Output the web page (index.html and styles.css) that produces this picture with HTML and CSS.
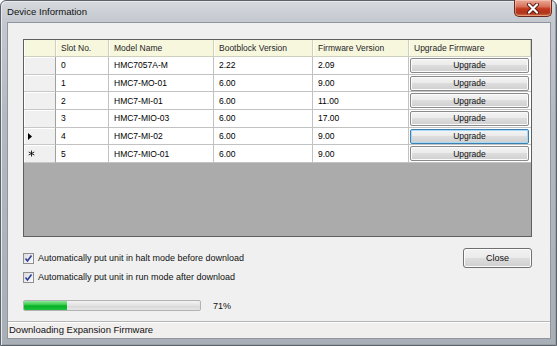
FILE: index.html
```html
<!DOCTYPE html>
<html>
<head>
<meta charset="utf-8">
<link rel="stylesheet" href="styles.css">
</head>
<body>
<div class="window">
  <div class="titlebar">
    <span class="title">Device Information</span>
    <div class="close-x">
      <svg width="14" height="11" viewBox="0 0 14 11"><path d="M3 1.5 L11 9.5 M11 1.5 L3 9.5" stroke="#5a1a10" stroke-width="4" stroke-linecap="round"/><path d="M3 1.5 L11 9.5 M11 1.5 L3 9.5" stroke="#fff" stroke-width="2.2" stroke-linecap="round"/></svg>
    </div>
  </div>
  <div class="client">
    <div class="content">
      <div class="grid">
        <div class="row head">
          <div class="c rh"></div>
          <div class="c slot">Slot No.</div>
          <div class="c model">Model Name</div>
          <div class="c boot">Bootblock Version</div>
          <div class="c fw">Firmware Version</div>
          <div class="c up">Upgrade Firmware</div>
        </div>
        <div class="row">
          <div class="c rh"></div>
          <div class="c slot">0</div>
          <div class="c model">HMC7057A-M</div>
          <div class="c boot">2.22</div>
          <div class="c fw">2.09</div>
          <div class="c up"><span class="btn">Upgrade</span></div>
        </div>
        <div class="row">
          <div class="c rh"></div>
          <div class="c slot">1</div>
          <div class="c model">HMC7-MO-01</div>
          <div class="c boot">6.00</div>
          <div class="c fw">9.00</div>
          <div class="c up"><span class="btn">Upgrade</span></div>
        </div>
        <div class="row">
          <div class="c rh"></div>
          <div class="c slot">2</div>
          <div class="c model">HMC7-MI-01</div>
          <div class="c boot">6.00</div>
          <div class="c fw">11.00</div>
          <div class="c up"><span class="btn">Upgrade</span></div>
        </div>
        <div class="row">
          <div class="c rh"></div>
          <div class="c slot">3</div>
          <div class="c model">HMC7-MIO-03</div>
          <div class="c boot">6.00</div>
          <div class="c fw">17.00</div>
          <div class="c up"><span class="btn">Upgrade</span></div>
        </div>
        <div class="row">
          <div class="c rh"><svg width="5" height="7" viewBox="0 0 5 7"><path d="M0 0 L4 3.5 L0 7 Z" fill="#000"/></svg></div>
          <div class="c slot">4</div>
          <div class="c model">HMC7-MI-02</div>
          <div class="c boot">6.00</div>
          <div class="c fw">9.00</div>
          <div class="c up"><span class="btn focus">Upgrade</span></div>
        </div>
        <div class="row">
          <div class="c rh"><svg width="7" height="7" viewBox="0 0 7 7"><path d="M3.5 0.5 V6.5 M0.7 2 L6.3 5 M6.3 2 L0.7 5" stroke="#111" stroke-width="0.9"/></svg></div>
          <div class="c slot">5</div>
          <div class="c model">HMC7-MIO-01</div>
          <div class="c boot">6.00</div>
          <div class="c fw">9.00</div>
          <div class="c up"><span class="btn">Upgrade</span></div>
        </div>
      </div>
      <div class="bottom">
        <div class="options">
          <label class="check-row"><span class="box"><svg width="9" height="9" viewBox="0 0 9 9"><path d="M1.5 4.5 L3.5 7 L7.5 1.5" stroke="#2a3f9a" stroke-width="1.6" fill="none"/></svg></span>Automatically put unit in halt mode before download</label>
          <label class="check-row second"><span class="box"><svg width="9" height="9" viewBox="0 0 9 9"><path d="M1.5 4.5 L3.5 7 L7.5 1.5" stroke="#2a3f9a" stroke-width="1.6" fill="none"/></svg></span>Automatically put unit in run mode after download</label>
          <div class="progress-row">
            <div class="progress"><div class="fill" style="width:43px"></div></div>
            <span class="pct">71%</span>
          </div>
        </div>
        <div class="close-btn">Close</div>
      </div>
    </div>
    <div class="status">Downloading Expansion Firmware</div>
  </div>
</div>
</body>
</html>
```
FILE: styles.css
```css
html, body {
  margin: 0;
  padding: 0;
}
body {
  width: 557px;
  height: 346px;
  overflow: hidden;
  background: #fff;
  font-family: "Liberation Sans", Arial, sans-serif;
  color: #000;
}
.window {
  box-sizing: border-box;
  width: 557px;
  height: 346px;
  border: 1px solid #5d636a;
  border-radius: 6px 6px 0 0;
  padding: 0 5px 6px 6px;
  display: flex;
  flex-direction: column;
  background: linear-gradient(to bottom, #d6dadf 0px, #c4c9cf 20px, #b3b9c0 120px, #a9afb6 346px);
  box-shadow: inset 1px 1px 0 #e8ebee, inset -1px -1px 0 #9aa0a7;
}
.titlebar {
  height: 21px;
  display: flex;
  align-items: flex-start;
  flex-shrink: 0;
}
.title {
  font-size: 9.6px;
  line-height: 21px;
  color: #111;
}
.close-x {
  margin-left: auto;
  margin-top: -1px;
  margin-right: -1px;
  width: 38px;
  height: 17px;
  box-sizing: border-box;
  border: 1px solid #6a2a20;
  border-top: none;
  border-radius: 0 0 5px 5px;
  background: linear-gradient(to bottom, #e9aa98 0%, #d9735c 40%, #c2391e 55%, #b0341c 80%, #cf6a3e 100%);
  display: flex;
  align-items: center;
  justify-content: center;
  box-shadow: inset 0 0 0 1px rgba(255,220,200,0.45);
}
.client {
  flex: 1;
  display: flex;
  flex-direction: column;
  background: #f0f0f0;
  border: 1px solid #8f969d;
}
.content {
  flex: 1;
  padding: 16px 18px 0 15px;
}
.grid {
  box-sizing: border-box;
  height: 198px;
  border: 1px solid #5f5f5f;
  background: #ababab;
  font-size: 8.5px;
}
.row {
  display: flex;
  height: 17.7px;
  background: #fff;
}
.row.head {
  height: 17px;
  background: #f7f7de;
}
.c {
  box-sizing: border-box;
  border-right: 1px solid #c2c2c2;
  border-bottom: 1px solid #c2c2c2;
  padding-left: 5px;
  display: flex;
  align-items: center;
  white-space: nowrap;
  overflow: hidden;
}
.head .c {
  border-right: 1px solid #d0d0bc;
  border-bottom: 1px solid #cfcfbf;
  box-shadow: inset 1px 0 0 #fff;
  color: #1e1e1e;
}
.rh { width: 32px; background: #f0f0f0; border-right-color: #a0a0a0; border-bottom-color: #c8c8c8; padding-left: 4px; box-shadow: inset 1px 1px 0 #fff; }
.head .rh { background: #f7f7de; }
.slot { width: 53px; }
.model { width: 105px; }
.boot { width: 99px; }
.fw { width: 96px; }
.up { flex: 1; border-right: none; }
.row:not(.head) .up { padding: 0 2px 0 1px; }
.btn {
  box-sizing: border-box;
  width: 100%;
  height: 15px;
  border: 1px solid #8a8a8a;
  border-radius: 2px;
  background: linear-gradient(to bottom, #f4f4f4 0%, #ebebeb 45%, #dddddd 50%, #cfcfcf 100%);
  display: flex;
  align-items: center;
  justify-content: center;
  box-shadow: inset 0 0 0 1px #fbfbfb;
  color: #111;
}
.btn.focus {
  border-color: #3c7fb1;
  box-shadow: inset 0 0 0 1px #a8daf5;
}
.bottom {
  display: flex;
  margin-top: 11px;
}
.options {
  flex: 1;
  padding-top: 2px;
  font-size: 9px;
}
.check-row {
  display: flex;
  align-items: center;
  height: 16px;
  gap: 4px;
  color: #111;
}
.check-row.second {
  margin-top: 3px;
}
.box {
  box-sizing: border-box;
  width: 11px;
  height: 11px;
  border: 1px solid #8e8f8f;
  background: linear-gradient(135deg, #dcdcdc, #fafafa);
  display: flex;
  align-items: center;
  justify-content: center;
}
.progress-row {
  display: flex;
  align-items: center;
  margin-top: 15px;
  gap: 12px;
}
.progress {
  box-sizing: border-box;
  width: 178px;
  height: 11px;
  border: 1px solid #b2b2b2;
  border-radius: 2px;
  background: linear-gradient(to bottom, #f3f3f3, #e2e2e2 50%, #d6d6d6 51%, #e6e6e6);
  overflow: hidden;
}
.fill {
  height: 100%;
  background: linear-gradient(to bottom, #8ee89a 0%, #3ccc4e 40%, #06b025 55%, #1fc03c 100%);
}
.pct {
  font-size: 9px;
  color: #111;
}
.close-btn {
  box-sizing: border-box;
  width: 69px;
  height: 20px;
  border: 1px solid #707070;
  border-radius: 3px;
  background: linear-gradient(to bottom, #f2f2f2 0%, #ebebeb 48%, #dddddd 52%, #cfcfcf 100%);
  box-shadow: inset 0 0 0 1px #fcfcfc;
  display: flex;
  align-items: center;
  justify-content: center;
  font-size: 9px;
  color: #111;
}
.status {
  height: 16px;
  border-top: 1px solid #b5b5b5;
  box-shadow: inset 0 1px 0 #fff;
  background: #f1efee;
  font-size: 9.5px;
  line-height: 16px;
  padding-left: 1px;
  color: #111;
}
```
